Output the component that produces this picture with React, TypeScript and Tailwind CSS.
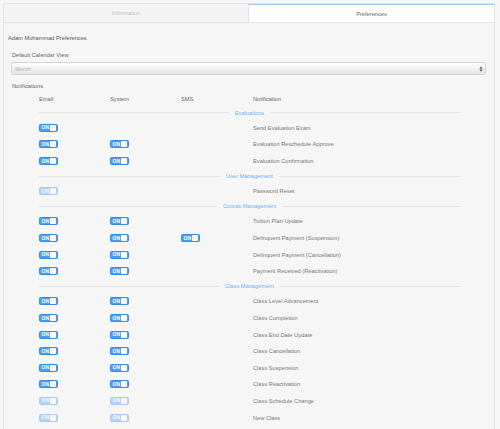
import React from "react";

type Row = {
  label: string;
  email?: boolean;
  system?: boolean;
  sms?: boolean;
  faded?: boolean;
};

type Section = { title: string; rows: Row[] };

const SECTIONS: Section[] = [
  {
    title: "Evaluations",
    rows: [
      { label: "Send Evaluation Exam", email: true },
      { label: "Evaluation Reschedule Approve", email: true, system: true },
      { label: "Evaluation Confirmation", email: true, system: true },
    ],
  },
  {
    title: "User Management",
    rows: [{ label: "Password Reset", email: true, faded: true }],
  },
  {
    title: "Course Management",
    rows: [
      { label: "Tuition Plan Update", email: true, system: true },
      { label: "Delinquent Payment (Suspension)", email: true, system: true, sms: true },
      { label: "Delinquent Payment (Cancellation)", email: true, system: true },
      { label: "Payment Received (Reactivation)", email: true, system: true },
    ],
  },
  {
    title: "Class Management",
    rows: [
      { label: "Class Level Advancement", email: true, system: true },
      { label: "Class Completion", email: true, system: true },
      { label: "Class End Date Update", email: true, system: true },
      { label: "Class Cancellation", email: true, system: true },
      { label: "Class Suspension", email: true, system: true },
      { label: "Class Reactivation", email: true, system: true },
      { label: "Class Schedule Change", email: true, system: true, faded: true },
      { label: "New Class", email: true, system: true, faded: true },
      // next row sits below the fold; its label is not visible
      { label: "", email: true, system: true, faded: true },
    ],
  },
];

function Toggle({ faded }: { faded?: boolean }) {
  return (
    <span
      className={
        "inline-flex h-[8px] w-[19px] items-center justify-between rounded-[1.5px] border border-[#3a8de6] bg-[#4a9df5] pl-[1.5px] pr-[1px] " +
        (faded ? "opacity-40" : "")
      }
    >
      <span className="text-[5px] font-bold leading-none text-white">ON</span>
      <span className="h-[6px] w-[6px] rounded-[1px] bg-white" />
    </span>
  );
}

function Divider({ title }: { title: string }) {
  return (
    <div className="flex h-[13.6px] w-[421px] items-center">
      <div className="h-px flex-1 bg-[#e4e4e4]" />
      <span className="px-[6px] text-[#6db1f5]">{title}</span>
      <div className="h-px flex-1 bg-[#e4e4e4]" />
    </div>
  );
}

export default function App() {
  return (
    <div className="h-[429px] w-[500px] overflow-hidden bg-[#f7f7f7] font-['Liberation_Sans',Arial,sans-serif] text-[5.7px] leading-[10px] text-[#777]">
      <div className="ml-[3px] mt-[3px] w-[492px] border-x border-t border-[#e2e2e2] bg-[#f6f6f6] pb-4">
        {/* tabs */}
        <div className="flex h-[19px] border-b border-[#e3e3e3]">
          <div className="flex flex-1 items-center justify-center bg-[#f4f4f4] text-[#c0c0c0]">
            Information
          </div>
          <div className="flex w-[246px] items-center justify-center border-l border-t border-l-[#e3e3e3] border-t-[#97c9f7] bg-white text-[#666]">
            Preferences
          </div>
        </div>

        <div className="pl-[4px] pt-[10px] text-[#555]">Adam Muhammad Preferences</div>

        <div className="pl-[8px] pt-[7px] text-[#666]">Default Calendar View</div>
        <div className="ml-[7px] mt-[2px] flex h-[13px] w-[475px] items-center justify-between rounded-[2px] border border-[#d4d4d4] bg-gradient-to-b from-white to-[#e4e4e4] pl-[3px] pr-[2px] text-[#b0b0b0] shadow-[inset_0_1px_0_#fff]">
          <span>Month</span>
          <svg width="4" height="6" viewBox="0 0 4 6">
            <path d="M2 0.5 L3.6 2.4 H0.4 Z M2 5.5 L3.6 3.6 H0.4 Z" fill="#444" />
          </svg>
        </div>

        <div className="pl-[8px] pt-[6px] text-[#666]">Notifications</div>

        <div className="ml-[35px]">
          <div className="grid h-[15px] grid-cols-[71px_71px_72px_1fr] items-center text-[#666]">
            <span>Email</span>
            <span>System</span>
            <span>SMS</span>
            <span>Notification</span>
          </div>

          {SECTIONS.map((section) => (
            <div key={section.title}>
              <Divider title={section.title} />
              {section.rows.map((row, i) => (
                <div
                  key={i}
                  className="grid h-[16.6px] grid-cols-[71px_71px_72px_1fr] items-center"
                >
                  <span className="flex">{row.email && <Toggle faded={row.faded} />}</span>
                  <span className="flex">{row.system && <Toggle faded={row.faded} />}</span>
                  <span className="flex">{row.sms && <Toggle faded={row.faded} />}</span>
                  <span>{row.label}</span>
                </div>
              ))}
            </div>
          ))}
        </div>
      </div>
    </div>
  );
}
